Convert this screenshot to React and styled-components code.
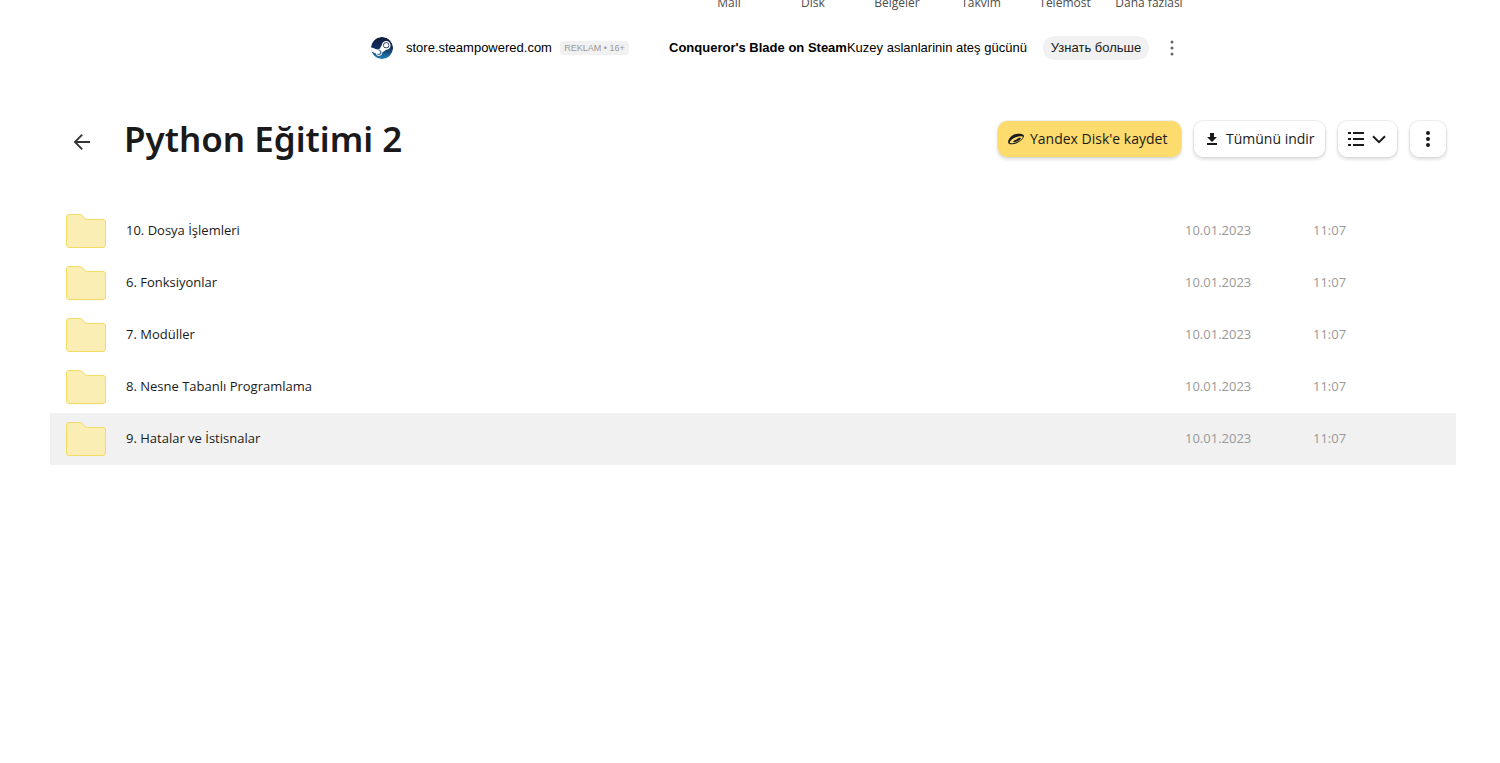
import React from 'react';
import styled, { createGlobalStyle } from 'styled-components';

const GlobalStyle = createGlobalStyle`
  *, *::before, *::after { box-sizing: border-box; }
  body {
    margin: 0;
    background: #fff;
    color: #1a1a1a;
    font-family: 'Open Sans', 'Noto Sans', sans-serif;
    font-size: 13px;
    line-height: 20px;
  }
  button { font: inherit; color: inherit; border: 0; cursor: pointer; }
  a { color: inherit; text-decoration: none; }
  svg { flex: none; }
`;

const ServiceBar = styled.header`
  display: flex;
  justify-content: flex-end;
  align-items: flex-end;
  height: 12px;
  padding-right: 309px;
  overflow: hidden;
`;

const ServiceNav = styled.nav`
  display: grid;
  grid-template-columns: repeat(6, 84px);
`;

const ServiceLink = styled.a`
  color: #4d4d4d;
  font-size: 12px;
  line-height: 18px;
  text-align: center;
  white-space: nowrap;
`;

const AdBar = styled.aside`
  display: flex;
  align-items: center;
  height: 72px;
  padding-left: 371px;
  color: #000;
  font-family: 'Liberation Sans', Arial, sans-serif;
  white-space: nowrap;
`;

const AdSite = styled.a`
  display: flex;
  align-items: center;
  gap: 13px;
  width: 181px;
  font-size: 13px;
`;

const AdLabel = styled.span`
  width: 69px;
  margin: 0 40px 0 8px;
  border-radius: 4px;
  background: #f1f1f1;
  color: #999;
  font-size: 9px;
  line-height: 14px;
  text-align: center;
`;

const AdText = styled.a`
  width: 358px;
  font-size: 13px;
`;

const AdButton = styled.button`
  width: 106px;
  height: 24px;
  margin: 0 13px 0 16px;
  padding: 0;
  border-radius: 12px;
  background: #f1f1f1;
  color: #1a1a1a;
  font-size: 13px;
`;

const PlainButton = styled.button`
  display: flex;
  padding: 0;
  background: none;
`;

const BackButton = styled(PlainButton)`
  padding-top: 6px;
`;

const Main = styled.main`
  padding: 0 44px 0 50px;
`;

const Toolbar = styled.div`
  display: flex;
  align-items: center;
  height: 110px;
  padding: 0 9px 0 20px;
`;

const Title = styled.h1`
  flex: 1;
  margin: 0 0 0 30px;
  font-family: 'Noto Sans', sans-serif;
  font-size: 35px;
  font-weight: 600;
  line-height: 44px;
`;

const Actions = styled.div`
  display: flex;
  gap: 11px;
`;

const ActionButton = styled.button`
  display: flex;
  align-items: center;
  justify-content: ${(p) => (p.$label ? 'flex-start' : 'center')};
  gap: ${(p) => (p.$label ? 6 : 7)}px;
  width: ${(p) => p.$width}px;
  height: 38px;
  padding: ${(p) => (p.$label ? '0 0 0 10px' : '0')};
  border: 1px solid rgba(0, 0, 0, 0.06);
  border-radius: 10px;
  background: ${(p) => (p.$accent ? '#fddb6d' : '#fff')};
  background-clip: padding-box;
  box-shadow: 0 2px 3px rgba(0, 0, 0, 0.1);
  font-size: 14px;
  white-space: nowrap;
`;

const Files = styled.table`
  width: 100%;
  margin-top: 11px;
  border-collapse: collapse;
  table-layout: fixed;
`;

const FileRow = styled.tr`
  height: 52px;
  background: ${(p) => (p.$active ? '#f1f1f1' : 'transparent')};
`;

const Cell = styled.td`
  width: ${(p) => (p.$width ? `${p.$width}px` : 'auto')};
  padding: 0 0 2px;
  color: ${(p) => (p.$muted ? '#999' : '#1a1a1a')};
  vertical-align: middle;
`;

const IconCell = styled(Cell)`
  padding: 0 0 0 15px;

  svg { display: block; }
`;

const services = ['Mail', 'Disk', 'Belgeler', 'Takvim', 'Telemost', 'Daha fazlası'];

const files = [
  { name: '10. Dosya İşlemleri' },
  { name: '6. Fonksiyonlar' },
  { name: '7. Modüller' },
  { name: '8. Nesne Tabanlı Programlama' },
  { name: '9. Hatalar ve İstisnalar', active: true },
];

const SteamIcon = () => (
  <svg width="22" height="22" viewBox="0 0 22 22" aria-hidden="true">
    <defs>
      <linearGradient id="steam" x1="0" y1="0" x2="0" y2="1">
        <stop offset="0" stopColor="#101a3c" />
        <stop offset="0.5" stopColor="#10305f" />
        <stop offset="1" stopColor="#2383b8" />
      </linearGradient>
      <clipPath id="disc"><circle cx="11" cy="11" r="11" /></clipPath>
    </defs>
    <g clipPath="url(#disc)">
      <circle cx="11" cy="11" r="11" fill="url(#steam)" />
      <path d="M-1 9.8 6.2 12.6 8.3 12.3 10.8 8.3A4.4 4.4 0 1 1 15.2 12.7L11.3 15.4A3.4 3.4 0 0 1 4.6 16.3L-1 14.1Z" fill="#fff" />
      <circle cx="15.2" cy="8.3" r="3" fill="#10224a" />
      <circle cx="15.2" cy="8.3" r="2.3" fill="#fff" />
      <path d="M5.7 16.5a2.5 2.5 0 1 0 1.3-3.4l1.3.6a1.8 1.8 0 0 1-1.3 3.3Z" fill="#48709c" />
    </g>
  </svg>
);

const DotsIcon = ({ radius, gap, color }) => (
  <svg width="20" height="20" viewBox="0 0 20 20" fill={color} aria-hidden="true">
    <circle cx="10" cy={10 - gap} r={radius} />
    <circle cx="10" cy="10" r={radius} />
    <circle cx="10" cy={10 + gap} r={radius} />
  </svg>
);

const BackIcon = () => (
  <svg width="24" height="24" viewBox="0 0 24 24" fill="none" stroke="#333" strokeWidth="1.8" aria-hidden="true">
    <path d="M20 12H5M12.2 4.7 4.9 12l7.3 7.3" />
  </svg>
);

const SaucerIcon = () => (
  <svg width="16" height="16" viewBox="0 0 16 16" aria-hidden="true">
    <path fillRule="evenodd" fill="#1a1a1a" d="M.3 12.1C-.6 9.4 2.7 4.7 6.9 3.3c3.3-1 8.6-.6 9 1.4.5 2.9-4.5 7.2-9.5 8.3-3.1.7-5.6.4-6.1-.9ZM2.4 9.9c1.8-2.2 6-4.5 10.1-4.7 1.9-.1 2.7.4 2.3 1.3-.9 2.1-5.2 4.8-9.3 5.6-2.1.4-3.7.3-3.8-.5 0-.5.2-1.1.7-1.7Z" />
    <path fill="#1a1a1a" d="M5.3 10.6c.3-.9 1.5-1.3 2.6-1.8 1.4-.7 2.1-1.9 4-2 1 0 1.2.6.7 1.3-1.2 1.5-4.3 3-6.4 3.1-.7 0-1-.2-.9-.6Z" />
  </svg>
);

const DownloadIcon = () => (
  <svg width="16" height="16" viewBox="0 0 16 16" fill="#1a1a1a" aria-hidden="true">
    <path d="M6 2h4v4h3L8 11 3 6h3ZM3 12h10v2H3Z" />
  </svg>
);

const ListIcon = () => (
  <svg width="16" height="16" viewBox="0 0 16 16" fill="#1a1a1a" aria-hidden="true">
    <path d="M0 1h3v2H0Zm5 0h11v2H5ZM0 7h3v2H0Zm5 0h11v2H5ZM0 13h3v2H0Zm5 0h11v2H5Z" />
  </svg>
);

const ChevronIcon = () => (
  <svg width="16" height="16" viewBox="0 0 16 16" fill="none" stroke="#1a1a1a" strokeWidth="2" aria-hidden="true">
    <path d="m2 5.2 6 6 6-6" />
  </svg>
);

const FolderIcon = () => (
  <svg width="42" height="36" viewBox="0 0 42 36" aria-hidden="true">
    <path d="M1.5 4q0-2.5 2.5-2.5h11.2q1.3 0 2.2 1l2.4 2.7q1 1.3 2.7 1.3H38q2.5 0 2.5 2.5v23q0 2.5-2.5 2.5H4q-2.5 0-2.5-2.5Z" fill="#fbeeb4" stroke="#f3dc66" />
  </svg>
);

export default function App() {
  return (
    <>
      <GlobalStyle />
      <ServiceBar>
        <ServiceNav>
          {services.map((name) => (
            <ServiceLink href="#" key={name}>{name}</ServiceLink>
          ))}
        </ServiceNav>
      </ServiceBar>
      <AdBar>
        <AdSite href="#"><SteamIcon />store.steampowered.com</AdSite>
        <AdLabel>REKLAM • 16+</AdLabel>
        <AdText href="#"><b>Conqueror's Blade on Steam</b>Kuzey aslanlarinin ateş gücünü</AdText>
        <AdButton>Узнать больше</AdButton>
        <PlainButton aria-label="Reklam seçenekleri"><DotsIcon radius={1.5} gap={6} color="#666" /></PlainButton>
      </AdBar>
      <Main>
        <Toolbar>
          <BackButton aria-label="Geri"><BackIcon /></BackButton>
          <Title>Python Eğitimi 2</Title>
          <Actions>
            <ActionButton $accent $label $width={185}><SaucerIcon />Yandex Disk'e kaydet</ActionButton>
            <ActionButton $label $width={133}><DownloadIcon />Tümünü indir</ActionButton>
            <ActionButton $width={61} aria-label="Görünüm"><ListIcon /><ChevronIcon /></ActionButton>
            <ActionButton $width={38} aria-label="Diğer"><DotsIcon radius={2} gap={6} color="#1a1a1a" /></ActionButton>
          </Actions>
        </Toolbar>
        <Files>
          <tbody>
            {files.map((file) => (
              <FileRow key={file.name} $active={file.active}>
                <IconCell $width={76}><FolderIcon /></IconCell>
                <Cell><a href="#">{file.name}</a></Cell>
                <Cell $muted $width={128}>10.01.2023</Cell>
                <Cell $muted $width={143}>11:07</Cell>
              </FileRow>
            ))}
          </tbody>
        </Files>
      </Main>
    </>
  );
}
